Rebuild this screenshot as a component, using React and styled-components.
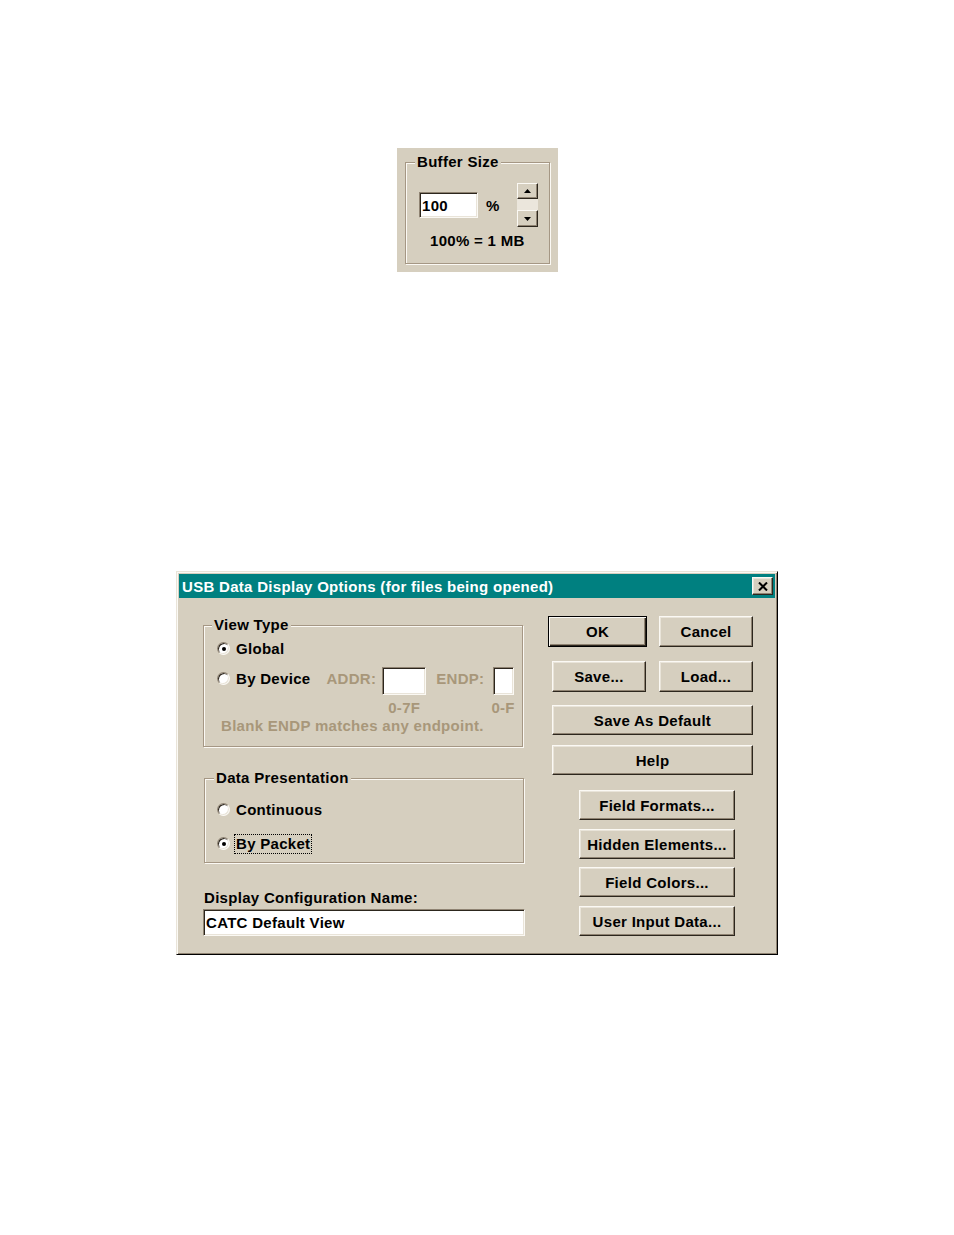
import React from 'react';
import styled, { createGlobalStyle, css } from 'styled-components';

const C = {
  face: '#d6cfbf',
  light: '#fbf9f4',
  hilite: '#e9e4d9',
  shadow: '#8f8372',
  dark: '#2c261d',
  disabled: '#a8977a',
  etch: '#a59784',
  teal: '#008080',
  spinGap: '#ebe6dc',
};

const GlobalStyle = createGlobalStyle`
  html, body { margin: 0; padding: 0; background: #fff; }
  body {
    font-family: "Liberation Sans", Arial, sans-serif;
    font-size: 15px;
    font-weight: 700;
    letter-spacing: 0.3px;
    color: #000;
  }
  *, *::before, *::after { box-sizing: border-box; }
`;

const Page = styled.div`
  display: flex;
  flex-direction: column;
  align-items: flex-start;
  padding-top: 148px;
  min-height: 1235px;
`;

/* ---------- shared pieces ---------- */

const GroupBox = styled.div`
  position: relative;
  width: ${(p) => p.$w}px;
  height: ${(p) => p.$h}px;
  margin-top: ${(p) => p.$mt || 0}px;
  margin-left: ${(p) => p.$ml || 0}px;
  border: 1px solid ${C.etch};
  box-shadow: inset 1px 1px 0 ${C.light}, 1px 1px 0 ${C.light};
  padding: ${(p) => p.$pad};
`;

const GroupTitle = styled.span`
  position: absolute;
  top: -10px;
  left: ${(p) => p.$left}px;
  padding: 0 2px;
  line-height: 17px;
  background: ${C.face};
  white-space: nowrap;
`;

const Sunken = styled.input`
  display: block;
  width: ${(p) => p.$w}px;
  height: ${(p) => p.$h}px;
  margin: 0;
  padding: 0 2px;
  background: #fff;
  border: 1px solid;
  border-color: ${C.shadow} ${C.light} ${C.light} ${C.shadow};
  box-shadow: inset 1px 1px 0 ${C.dark}, inset -1px -1px 0 ${C.hilite};
  font: inherit;
  letter-spacing: inherit;
  color: #000;
  outline: none;
`;

const Radio = styled.span`
  position: relative;
  flex: none;
  width: 13px;
  height: 13px;
  border-radius: 50%;
  background: #fff;
  border: 1px solid;
  border-color: ${C.shadow} ${C.light} ${C.light} ${C.shadow};
  box-shadow: inset 1px 1px 0 ${C.dark}, inset -1px -1px 0 ${C.hilite};
  ${(p) =>
    p.$checked &&
    css`
      &::after {
        content: '';
        position: absolute;
        left: 3.5px;
        top: 3.5px;
        width: 4px;
        height: 4px;
        border-radius: 50%;
        background: #000;
      }
    `}
`;

const RadioOption = styled.label`
  display: flex;
  align-items: center;
  gap: 6px;
  height: ${(p) => p.$h || 17}px;
  line-height: 17px;
  white-space: nowrap;
`;

const FocusBox = styled.span`
  margin-left: -2px;
  padding: 0 1px;
  line-height: 18px;
  border: 1px dotted #000;
`;

const Button = styled.button`
  flex: none;
  width: ${(p) => p.$w}px;
  height: ${(p) => p.$h || 30}px;
  margin: 0;
  padding: 0;
  background: ${C.face};
  font: inherit;
  letter-spacing: inherit;
  color: #000;
  text-align: center;
  border: 1px solid;
  border-color: ${C.light} ${C.dark} ${C.dark} ${C.light};
  box-shadow: inset -1px -1px 0 ${C.shadow}, inset 1px 1px 0 ${C.hilite};
  ${(p) =>
    p.$default &&
    css`
      border-color: #000;
      box-shadow: inset 1px 1px 0 ${C.light}, inset -1px -1px 0 ${C.dark},
        inset -2px -2px 0 ${C.shadow};
    `}
`;

const ButtonRow = styled.div`
  display: flex;
  gap: ${(p) => p.$gap || 0}px;
  margin-top: ${(p) => p.$mt}px;
  margin-right: ${(p) => p.$mr || 0}px;
`;

/* ---------- buffer size panel ---------- */

const BufferPanel = styled.div`
  margin-left: 397px;
  width: 161px;
  height: 124px;
  padding: 14px 8px 8px;
  background: ${C.face};
`;

const BufferRow = styled.div`
  display: flex;
  align-items: center;
  height: 44px;
  margin-top: 20px;
  padding-left: 13px;
`;

const Percent = styled.span`
  margin-left: 8px;
  margin-right: 17px;
`;

const Spinner = styled.div`
  display: flex;
  flex-direction: column;
  width: 21px;
`;

const SpinButton = styled.div`
  display: flex;
  align-items: center;
  justify-content: center;
  height: ${(p) => p.$h}px;
  background: ${C.face};
  border: 1px solid;
  border-color: ${C.light} ${C.dark} ${C.dark} ${C.light};
  box-shadow: inset -1px -1px 0 ${C.shadow};
`;

const SpinGap = styled.div`
  height: 11px;
  background: ${C.spinGap};
`;

const BufferCaption = styled.div`
  margin-top: 5px;
  padding-left: 24px;
  line-height: 17px;
`;

/* ---------- dialog ---------- */

const Dialog = styled.div`
  margin-left: 176px;
  margin-top: 299px;
  width: 602px;
  height: 384px;
  padding: 2px;
  background: ${C.face};
  border: 1px solid;
  border-color: ${C.hilite} #000 #000 ${C.hilite};
  box-shadow: inset 1px 1px 0 ${C.light}, inset -1px -1px 0 ${C.shadow};
`;

const TitleBar = styled.div`
  display: flex;
  align-items: center;
  justify-content: space-between;
  height: 24px;
  padding: 0 2px 0 3px;
  background: ${C.teal};
`;

const TitleText = styled.span`
  color: #fff;
  white-space: nowrap;
`;

const CloseButton = styled.div`
  display: flex;
  align-items: center;
  justify-content: center;
  width: 21px;
  height: 18px;
  background: ${C.face};
  border: 1px solid;
  border-color: ${C.light} ${C.dark} ${C.dark} ${C.light};
  box-shadow: inset -1px -1px 0 ${C.shadow}, inset 1px 1px 0 ${C.hilite};
`;

const Body = styled.div`
  display: flex;
  gap: 23px;
  padding: 0 20px 0 24px;
`;

const LeftCol = styled.div`
  display: flex;
  flex-direction: column;
  width: 322px;
`;

const RightCol = styled.div`
  display: flex;
  flex-direction: column;
  align-items: flex-end;
  width: 205px;
`;

const DeviceRow = styled.div`
  display: flex;
  align-items: flex-start;
  margin-top: 10px;
`;

const DimLabel = styled.span`
  color: ${C.disabled};
  line-height: 24px;
  margin-left: ${(p) => p.$ml}px;
  margin-right: ${(p) => p.$mr}px;
  white-space: nowrap;
`;

const FieldStack = styled.div`
  display: flex;
  flex-direction: column;
  align-items: center;
`;

const Hint = styled.span`
  color: ${C.disabled};
  margin-top: 4px;
  line-height: 17px;
  white-space: nowrap;
`;

const Note = styled.div`
  color: ${C.disabled};
  margin-top: 1px;
  padding-left: 4px;
  line-height: 17px;
  white-space: nowrap;
`;

const RadioList = styled.div`
  display: flex;
  flex-direction: column;
  gap: ${(p) => p.$gap}px;
`;

const FieldLabel = styled.div`
  margin-top: 26px;
  margin-left: 1px;
  line-height: 17px;
`;

const NameInput = styled(Sunken)`
  margin-top: 3px;
`;

const TriUp = () => (
  <svg width="7" height="4" viewBox="0 0 7 4">
    <polygon points="3.5,0 7,4 0,4" fill="#000" />
  </svg>
);

const TriDown = () => (
  <svg width="7" height="4" viewBox="0 0 7 4">
    <polygon points="0,0 7,0 3.5,4" fill="#000" />
  </svg>
);

const CloseGlyph = () => (
  <svg width="10" height="9" viewBox="0 0 10 9">
    <path d="M1 0.5 L9 8.5 M9 0.5 L1 8.5" stroke="#000" strokeWidth="2" />
  </svg>
);

export default function App() {
  return (
    <>
      <GlobalStyle />
      <Page>
        <BufferPanel>
          <GroupBox $w={145} $h={102} $pad="0">
            <GroupTitle $left={9}>Buffer Size</GroupTitle>
            <BufferRow>
              <Sunken $w={59} $h={26} readOnly value="100" />
              <Percent>%</Percent>
              <Spinner>
                <SpinButton $h={16}>
                  <TriUp />
                </SpinButton>
                <SpinGap />
                <SpinButton $h={17}>
                  <TriDown />
                </SpinButton>
              </Spinner>
            </BufferRow>
            <BufferCaption>100% = 1 MB</BufferCaption>
          </GroupBox>
        </BufferPanel>

        <Dialog>
          <TitleBar>
            <TitleText>USB Data Display Options (for files being opened)</TitleText>
            <CloseButton>
              <CloseGlyph />
            </CloseButton>
          </TitleBar>
          <Body>
            <LeftCol>
              <GroupBox $w={320} $h={122} $mt={27} $pad="14px 0 0 13px">
                <GroupTitle $left={8}>View Type</GroupTitle>
                <RadioOption>
                  <Radio $checked />
                  Global
                </RadioOption>
                <DeviceRow>
                  <RadioOption $h={22}>
                    <Radio />
                    By Device
                  </RadioOption>
                  <DimLabel $ml={16} $mr={6}>ADDR:</DimLabel>
                  <FieldStack>
                    <Sunken $w={44} $h={28} readOnly value="" />
                    <Hint>0-7F</Hint>
                  </FieldStack>
                  <DimLabel $ml={10} $mr={7}>ENDP:</DimLabel>
                  <FieldStack>
                    <Sunken $w={21} $h={28} readOnly value="" />
                    <Hint>0-F</Hint>
                  </FieldStack>
                </DeviceRow>
                <Note>Blank ENDP matches any endpoint.</Note>
              </GroupBox>

              <GroupBox $w={320} $h={85} $mt={31} $ml={1} $pad="22px 0 0 12px">
                <GroupTitle $left={9}>Data Presentation</GroupTitle>
                <RadioList $gap={17}>
                  <RadioOption>
                    <Radio />
                    Continuous
                  </RadioOption>
                  <RadioOption>
                    <Radio $checked />
                    <FocusBox>By Packet</FocusBox>
                  </RadioOption>
                </RadioList>
              </GroupBox>

              <FieldLabel>Display Configuration Name:</FieldLabel>
              <NameInput $w={322} $h={27} readOnly value="CATC Default View" />
            </LeftCol>

            <RightCol>
              <ButtonRow $mt={18} $gap={12}>
                <Button $w={99} $h={31} $default>OK</Button>
                <Button $w={94} $h={31}>Cancel</Button>
              </ButtonRow>
              <ButtonRow $mt={14} $gap={13}>
                <Button $w={94} $h={31}>Save...</Button>
                <Button $w={94} $h={31}>Load...</Button>
              </ButtonRow>
              <ButtonRow $mt={13}>
                <Button $w={201}>Save As Default</Button>
              </ButtonRow>
              <ButtonRow $mt={10}>
                <Button $w={201}>Help</Button>
              </ButtonRow>
              <ButtonRow $mt={15} $mr={18}>
                <Button $w={156}>Field Formats...</Button>
              </ButtonRow>
              <ButtonRow $mt={9} $mr={18}>
                <Button $w={156}>Hidden Elements...</Button>
              </ButtonRow>
              <ButtonRow $mt={8} $mr={18}>
                <Button $w={156}>Field Colors...</Button>
              </ButtonRow>
              <ButtonRow $mt={9} $mr={18}>
                <Button $w={156}>User Input Data...</Button>
              </ButtonRow>
            </RightCol>
          </Body>
        </Dialog>
      </Page>
    </>
  );
}
